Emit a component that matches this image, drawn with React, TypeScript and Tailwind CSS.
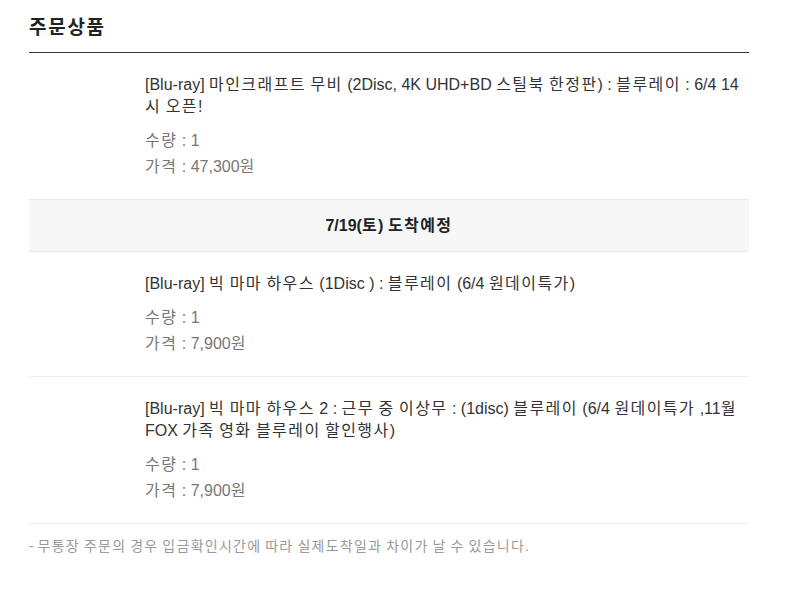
import React from "react";

const HANGUL = /([\uAC00-\uD7A3\u3130-\u318F]+)/;

function K({ children }: { children: string }) {
  const parts = children.split(HANGUL);
  return (
    <span>
      {parts.map((p, i) =>
        HANGUL.test(p) ? (
          <span key={i} className="tracking-[0.09em]">
            {p}
          </span>
        ) : (
          <React.Fragment key={i}>{p}</React.Fragment>
        )
      )}
    </span>
  );
}

type Item = { title: string; qty: number; price: string };

const items1: Item[] = [
  {
    title: "[Blu-ray] 마인크래프트 무비 (2Disc, 4K UHD+BD 스틸북 한정판) : 블루레이 : 6/4 14시 오픈!",
    qty: 1,
    price: "47,300원",
  },
];

const items2: Item[] = [
  {
    title: "[Blu-ray] 빅 마마 하우스 (1Disc ) : 블루레이 (6/4 원데이특가)",
    qty: 1,
    price: "7,900원",
  },
  {
    title: "[Blu-ray] 빅 마마 하우스 2 : 근무 중 이상무 : (1disc) 블루레이 (6/4 원데이특가 ,11월 FOX 가족 영화 블루레이 할인행사)",
    qty: 1,
    price: "7,900원",
  },
];

function Product({ item }: { item: Item }) {
  return (
    <div className="pl-[116px] pr-2 pt-[21px] pb-[19px]">
      <div className="text-[16px] leading-[22px] text-[#333]">
        <K>{item.title}</K>
      </div>
      <div className="mt-[10px] text-[16px] leading-[26px] text-[#777]">
        <div>
          <K>{"수량 : " + item.qty}</K>
        </div>
        <div>
          <K>{"가격 : " + item.price}</K>
        </div>
      </div>
    </div>
  );
}

export default function App() {
  return (
    <div
      className="w-[798px] min-h-[605px] bg-white px-[29px]"
      style={{ fontFamily: '"Liberation Sans", "Noto Sans CJK KR", sans-serif' }}
    >
      <div className="w-[720px]">
        <h2 className="pt-[14px] pb-[11px] text-[19px] leading-[27px] font-bold text-[#222] border-b border-[#333]">
          <K>주문상품</K>
        </h2>
        {items1.map((it, i) => (
          <Product key={i} item={it} />
        ))}
        <div className="h-[53px] bg-[#f7f7f7] border-y border-[#e9e9e9] flex items-center justify-center text-[16px] font-bold text-[#222]">
          <K>7/19(토) 도착예정</K>
        </div>
        <div className="divide-y divide-[#eee] border-b border-[#eee]">
          {items2.map((it, i) => (
            <Product key={i} item={it} />
          ))}
        </div>
        <p className="pt-[13px] text-[14px] leading-[18px] text-[#999]">
          <K>- 무통장 주문의 경우 입금확인시간에 따라 실제도착일과 차이가 날 수 있습니다.</K>
        </p>
      </div>
    </div>
  );
}
